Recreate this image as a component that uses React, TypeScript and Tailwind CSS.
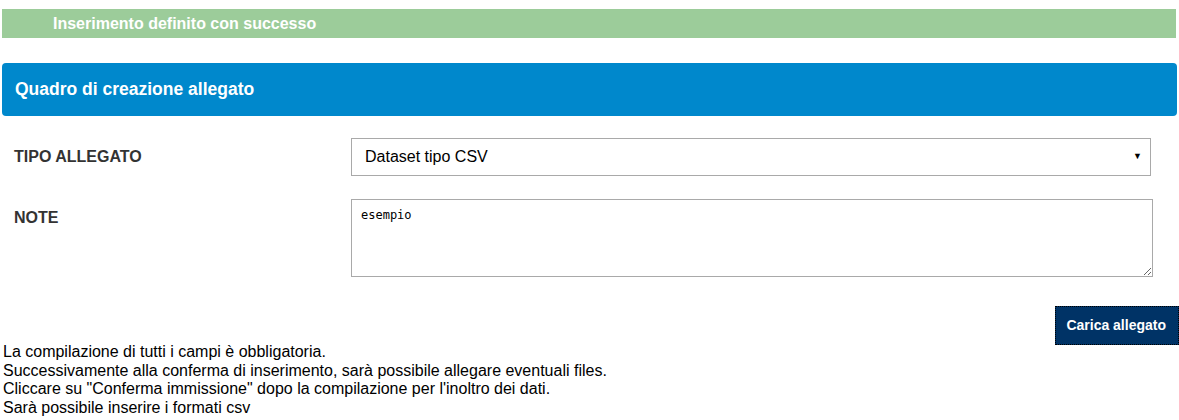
import React from "react";

const App = () => {
    const notes = [
        "La compilazione di tutti i campi è obbligatoria.",
        "Successivamente alla conferma di inserimento, sarà possibile allegare eventuali files.",
        'Cliccare su "Conferma immissione" dopo la compilazione per l\'inoltro dei dati.',
        "Sarà possibile inserire i formati csv",
    ];

    return (
        <div className="w-[1179px] h-[420px] overflow-hidden bg-white font-['Liberation_Sans',Arial,sans-serif]">
            {/* esito */}
            <div className="mt-[9px] mx-[2px] w-[1174px] h-[29px] bg-[#9ccc9a] flex items-center pl-[51px]">
                <span className="text-white font-bold text-[16px]">Inserimento definito con successo</span>
            </div>

            {/* pannello */}
            <div className="mt-[25px] ml-[2px] w-[1175px] h-[53px] bg-[#0088cc] rounded-[4px] flex items-center pl-[13px]">
                <h2 className="text-white font-bold text-[17.5px]">Quadro di creazione allegato</h2>
            </div>

            <div className="mt-[22px] flex items-center">
                <div className="w-[351px] pl-[14px] text-[16px] font-bold text-[#333]">TIPO ALLEGATO</div>
                <div className="w-[800px] h-[38px] border border-[#a9a9a9] flex items-center justify-between pl-[13px] pr-[8px]">
                    <span className="text-[16px] text-black">Dataset tipo CSV</span>
                    <span className="text-[9px] text-black">▼</span>
                </div>
            </div>

            <div className="mt-[23px] flex items-start">
                <div className="w-[351px] pl-[14px] pt-[7px] text-[16px] font-bold text-[#333]">NOTE</div>
                <textarea
                    readOnly
                    defaultValue="esempio"
                    className="w-[802px] h-[78px] border border-[#a9a9a9] px-[9px] py-[8px] text-[12px] leading-[15px] text-black font-['DejaVu_Sans_Mono',monospace] outline-none"
                />
            </div>

            <div className="mt-[29px] flex justify-end">
                <button className="h-[39px] pl-[11px] pr-[13px] bg-[#003366] text-white font-bold text-[14px] outline-1 outline-dotted outline-black outline-offset-[-1px]">
                    Carica allegato
                </button>
            </div>

            <div className="-mt-[2px] pl-[3px] text-[16px] leading-[18.6px] text-black">
                {notes.map((n, i) => (
                    <div key={i}>{n}</div>
                ))}
            </div>
        </div>
    );
};

export default App;
